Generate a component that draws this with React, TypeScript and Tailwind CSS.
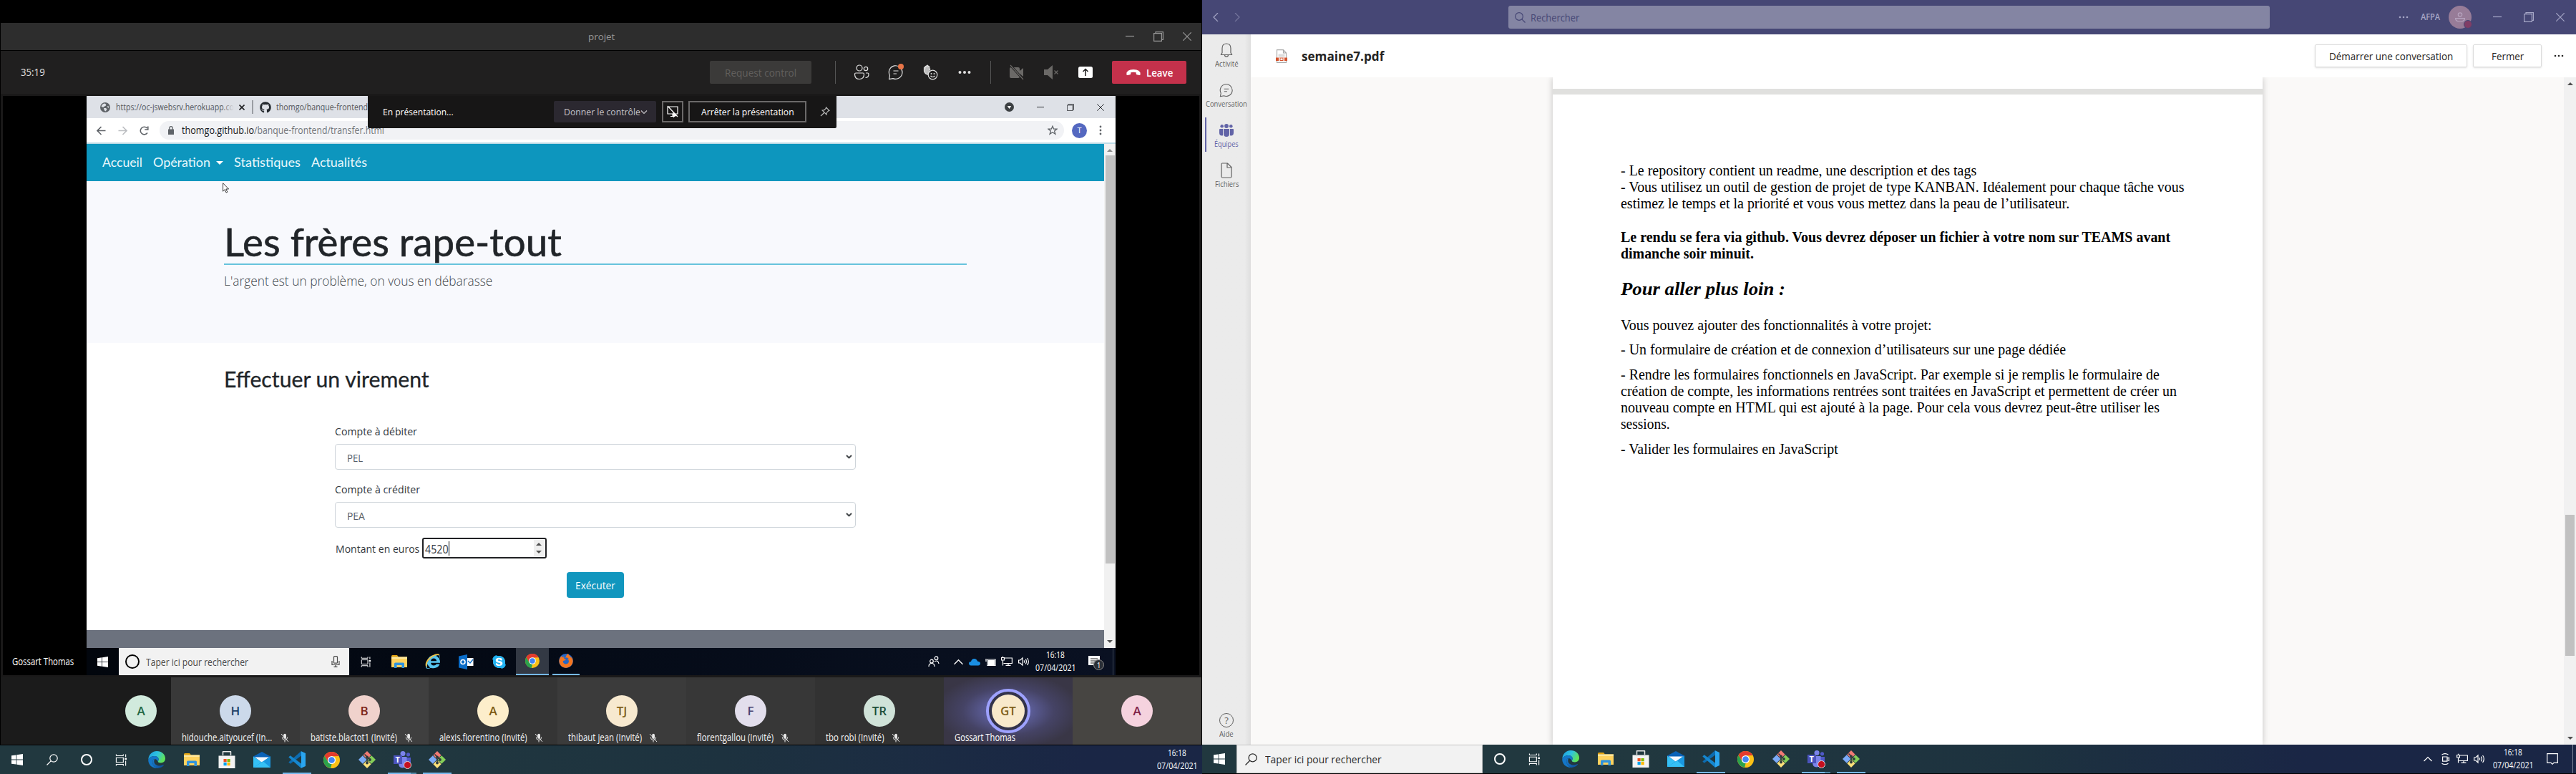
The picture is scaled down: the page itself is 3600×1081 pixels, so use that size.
import React, { useLayoutEffect, useRef, useState } from "react";
import { FaGithub, FaSkype, FaFirefoxBrowser, FaInternetExplorer } from "react-icons/fa";

/* A single line of text condensed or stretched to a given width. */
function Fit({ w, className = "", children }: { w: number; className?: string; children: React.ReactNode }) {
  const ref = useRef<HTMLSpanElement>(null);
  const [k, setK] = useState(1);
  useLayoutEffect(() => {
    if (ref.current) setK(w / ref.current.offsetWidth);
  }, [w]);
  return (
    <span className={"inline-block shrink-0 whitespace-nowrap " + className} style={{ width: w }}>
      <span ref={ref} className="inline-block origin-left" style={{ transform: `scaleX(${k})` }}>
        {children}
      </span>
    </span>
  );
}

function Svg({ s = 20, h, vb = "0 0 20 20", className = "", children }: { s?: number; h?: number; vb?: string; className?: string; children: React.ReactNode }) {
  return (
    <svg width={s} height={h ?? s} viewBox={vb} className={"shrink-0 " + className} fill="none" stroke="currentColor" strokeWidth="1.2">
      {children}
    </svg>
  );
}

const Min = ({ s = 12 }) => <Svg s={s} vb="0 0 12 12"><path d="M0 5.5h12" /></Svg>;
const Restore = ({ s = 14 }) => <Svg s={s} vb="0 0 14 14"><path d="M.6 2.6h10.8v10.8H.6zM3 2.6V.6h10.4v10.8h-2" /></Svg>;
const Cross = ({ s = 12 }) => <Svg s={s} vb="0 0 12 12"><path d="M.3.3l11.4 11.4M11.7.3L.3 11.7" /></Svg>;
const Dots = ({ s = 14 }) => <Svg s={s} vb="0 0 14 14"><g fill="currentColor" stroke="none"><circle cx="2" cy="7" r="1.3" /><circle cx="7" cy="7" r="1.3" /><circle cx="12" cy="7" r="1.3" /></g></Svg>;

const WinLogo = ({ s = 16 }) => (
  <Svg s={s} vb="0 0 16 16"><path fill="#fff" stroke="none" d="M0 2.3l6.6-.9v6.2H0zM7.4 1.3L16 0v7.6H7.4zM0 8.4h6.6v6.2L0 13.7zM7.4 8.4H16V16l-8.6-1.3z" /></Svg>
);
const Magnifier = ({ s = 16 }) => <Svg s={s} vb="0 0 16 16"><circle cx="10" cy="6" r="5.2" /><path d="M6.3 9.7L.5 15.5" /></Svg>;
const TaskView = ({ s = 18 }) => (
  <Svg s={s} vb="0 0 18 18"><path d="M1.5 5.500h10.500v7H1.500zM1.500 .5v2.200M12 .5v2.200M1.500 2.700H12M1.500 17.500v-2.200h10.500v2.200M15.500 .5v4M15.500 10v7.500" /><path d="M14 6h3v2.500h-3z" fill="currentColor" stroke="none" /></Svg>
);
const Edge = () => (
  <Svg s={24} vb="0 0 24 24">
    <defs>
      <linearGradient id="edA" x1="0" y1="0" x2="1" y2=".4"><stop offset="0" stopColor="#1b9de2" /><stop offset=".55" stopColor="#2fc3df" /><stop offset="1" stopColor="#5fe35a" /></linearGradient>
      <linearGradient id="edB" x1="0" y1="0" x2="1" y2="1"><stop offset="0" stopColor="#1b7fd0" /><stop offset="1" stopColor="#0c4a94" /></linearGradient>
    </defs>
    <g stroke="none">
      <path fill="url(#edA)" d="M.3 11.500C1 4 6.500 0 12 0c7 0 12 4.800 12 10.300 0 4.200-3 6.200-6 6.200-2.700 0-4.300-1-4.300-2 0-.8 1-1.200 1-3C14.700 9 12 7 8.800 7 5 7 1.800 9 .3 11.500z" />
      <path fill="#1477c8" d="M.3 11.500C1.800 9 5 7 8.800 7c3.200 0 5.900 2 5.900 4.500 0 1.800-1 2.200-1 3 0 0-2-3.500-4.500-3.500-2 0-3 2-3 4.500 0 4 3 7.500 6.800 8.400C5.500 24.500-.5 18.500.3 11.500z" />
      <path fill="url(#edB)" d="M6.200 15.500c0-2.500 1-4.500 3-4.500-.6 1-.9 2-.9 3.200 0 4 4 6.300 8 6.300 2.500 0 4.200-1 5.200-1.400.5 0 .6.300.4.700C20 22.500 16.500 24 13 23.900c-3.800-.9-6.800-4.400-6.800-8.400z" />
    </g>
  </Svg>
);
const Folder = () => (
  <Svg s={22} h={20} vb="0 0 22 20"><g stroke="none"><path fill="#e5a50f" d="M0 2.500Q0 1 1.500 1H8l2 2.500H0z" /><path fill="#ffd25e" d="M0 3.500h22V18H0z" /><path fill="#2f93dd" d="M4 19v-6q0-1.500 1.500-1.500h11Q18 11.500 18 13v6h-3.500v-4h-7v4z" /><path fill="#ffe79b" d="M0 3.500h22V6H0z" /></g></Svg>
);
const Store = () => (
  <Svg s={24} h={24} vb="0 0 24 24"><path stroke="#e8e8e8" strokeWidth="1.500" d="M6.500 6V1q0-.3.500-.3h10q.5 0 .5.300v5" /><g stroke="none"><path fill="#f3f3f3" d="M.5 6.500h23V24H.5z" /><path fill="#f25022" d="M7.500 11H11.700v4.200H7.500z" /><path fill="#7fba00" d="M12.500 11h4.200v4.200h-4.200z" /><path fill="#00a4ef" d="M7.500 16h4.200v4.200H7.500z" /><path fill="#ffb900" d="M12.500 16h4.200v4.200h-4.200z" /></g></Svg>
);
const Mail = () => (
  <Svg s={24} h={22} vb="0 0 24 22"><g stroke="none"><path fill="#0a63b8" d="M0 6.500l12-6.500 12 6.500v8H0z" /><path fill="#f5f9fd" d="M2 7.500h20L12 15z" /><path fill="#35c0f5" d="M0 6.500L12 15l12-8.500V22H0z" /><path fill="#1a97e0" d="M0 22L24 6.500V22z" /><path fill="#35c0f5" d="M0 22L14 13.500 24 22z" /></g></Svg>
);
const Code = () => (
  <Svg s={24} vb="0 0 24 24"><g stroke="none"><path fill="#0d6cb0" d="M.3 15.600L2.700 17.700 18 6.500V0z" /><path fill="#1587cf" d="M.3 8.400L2.700 6.300 18 17.500V24z" /><path fill="#2aa5ef" d="M17.500 0L24 3v18l-6.500 3q.5-.3.500-1.500v-21q0-1.200-.5-1.500z" /></g></Svg>
);
const Chrome = ({ s = 23 }) => (
  <Svg s={s} vb="0 0 24 24"><g stroke="none"><circle cx="12" cy="12" r="12" fill="#fbc116" /><path fill="#e33b2e" d="M1.600 6A12 12 0 0 1 22.400 6.200L12 6.500 7 15z" /><path fill="#2ba24c" d="M1.600 6L7 15l5 3-1.500 5.900A12 12 0 0 1 1.600 6z" /><circle cx="12" cy="12" r="5.800" fill="#fff" /><circle cx="12" cy="12" r="4.500" fill="#4285f4" /></g></Svg>
);
const Git = () => (
  <Svg s={24} vb="0 0 24 24">
    <g stroke="none"><path fill="#f27b74" d="M12 0l5.600 5.700L12 11.400 6.400 5.700z" /><path fill="#7cabf8" d="M5.800 6.300l5.700 5.700-5.700 5.700L0 12z" /><path fill="#85cf58" d="M18.200 6.300L24 12l-5.800 5.700-5.700-5.700z" /><path fill="#fbe07a" d="M12 12.600l5.600 5.700L12 24l-5.600-5.700z" /></g>
    <path stroke="#2d3a3e" strokeWidth="1.600" d="M8.500 4.500L12 8v9M12 8l4 4" /><g fill="#2d3a3e" stroke="none"><circle cx="12" cy="8.300" r="1.900" /><circle cx="12" cy="16.500" r="1.900" /><circle cx="16" cy="12" r="1.900" /></g>
  </Svg>
);
const Teams = () => (
  <div className="relative flex size-6 items-center justify-center">
    <Svg s={24} vb="0 0 24 24"><g stroke="none"><circle cx="13" cy="3.500" r="3.500" fill="#7b83eb" /><circle cx="20.500" cy="4.800" r="2.600" fill="#5059c9" /><path fill="#5059c9" d="M16 9h8v7q-.5 5-5 5z" /><path fill="#7b83eb" d="M7 8h11.500v9q-.8 6.500-6 6.500T7 17z" /><path fill="#4b53bc" d="M0 6h12v12H0z" /></g></Svg>
    <span className="absolute left-[3px] top-[4px] text-[11px] font-bold leading-4 text-white">T</span>
    <span className="absolute -bottom-px left-[14px] size-[11px] rounded-full border border-[#dcdcdc] bg-[#c50f1f]" />
  </div>
);
const Chat = ({ s = 22 }) => <Svg s={s} vb="0 0 22 22"><path d="M2.500 15.500A9.300 9.300 0 1 1 7 19.600L1.500 20.700z" strokeLinejoin="round" /><path d="M7.500 9h7M7.500 13h4.500" /></Svg>;
const Net = ({ s = 16 }) => <Svg s={s} vb="0 0 16 16"><path d="M5 3h10.400v7.500H3.500M.6 2.500h3.800v3.500H.6zM2.500 6v7.500M2.500 2V.8M10 10.500V13M6.500 13.400h7" /></Svg>;
const Vol = ({ s = 16 }) => <Svg s={s} vb="0 0 16 16"><path d="M.6 6h2.200L6 3v10L2.800 10H.6zM8 6.300q1.200 1.700 0 3.400M10.300 4.600q2.300 3.400 0 6.800M12.600 3q3.500 5 0 10" /></Svg>;
const Up = ({ s = 12 }) => <Svg s={s} vb="0 0 12 12"><path d="M.5 9L6 3.500 11.500 9" /></Svg>;
const MicOff = () => (
  <Svg s={12} h={13} vb="0 0 12 13"><rect x="4.200" y=".8" width="3.800" height="7" rx="1.900" fill="#e8e8e8" stroke="none" /><path stroke="#e8e8e8" strokeWidth="1" d="M2.300 5.500q0 4 3.700 4t3.700-4M6 9.500V12.500M1 1l10 11" /></Svg>
);
const Caret = ({ up = false, c = "#505050" }) => <Svg s={8} h={4} vb="0 0 8 4"><path fill={c} stroke="none" d={up ? "M0 4l4-4 4 4z" : "M0 0l4 4 4-4z"} /></Svg>;

function Clock() {
  return (
    <div className="flex w-[58px] shrink-0 flex-col items-center text-[12px] leading-[18px] text-white">
      <Fit w={26}>16:18</Fit>
      <Fit w={57}>07/04/2021</Fit>
    </div>
  );
}

function Slot({ children, line }: { children: React.ReactNode; line?: string }) {
  return (
    <div className="relative flex h-full w-[49px] shrink-0 items-center justify-center">
      {children}
      {line && <span className={"absolute bottom-0 h-0.5 w-10 bg-[#76b9ed] " + line} />}
    </div>
  );
}

function AppIcons() {
  return (
    <>
      <Slot><Edge /></Slot>
      <Slot><Folder /></Slot>
      <Slot><Store /></Slot>
      <Slot><Mail /></Slot>
      <Slot line="block"><Code /></Slot>
      <Slot><Chrome /></Slot>
      <Slot><Git /></Slot>
      <Slot line="border-r-8 border-[#5089a8]"><Teams /></Slot>
      <Slot line="block"><Git /></Slot>
    </>
  );
}

function MeetingHeader() {
  return (
    <>
      <div className="flex h-[38px] items-center bg-[#2d2d2d] text-[#979797]">
        <Fit w={37} className="ml-[821px] text-[13px] leading-5">projet</Fit>
        <div className="ml-auto mr-[14px] flex items-center gap-[27px]"><Min /><Restore /><Cross /></div>
      </div>
      <div className="mt-px flex h-[60px] items-center bg-[#201f1f] text-[#e0e0e0]">
        <Fit w={34} className="ml-7 text-[14px] leading-5">35:19</Fit>
        <div className="ml-[929px] flex h-8 w-[142px] items-center justify-center rounded-[2px] bg-[#3b3a39] text-[14px] text-[#62605e]"><Fit w={100}>Request control</Fit></div>
        <div className="ml-[33px] h-8 w-px bg-[#555]" />
        <div className="ml-3 flex items-center">
          <div className="flex w-12 justify-center"><Svg s={22} vb="0 0 22 22"><circle cx="8" cy="5" r="4" /><circle cx="17" cy="6" r="2.700" /><path d="M3 12h10q1.500 0 1.500 1.500 0 7-6.500 7t-6.500-7Q1.500 12 3 12zM17 12h2.500q1.500 0 1.500 1.500 0 5-4.500 5" /></Svg></div>
          <div className="relative flex w-12 justify-center"><Chat /><span className="absolute -top-[1px] right-[13px] size-2 rounded-full bg-[#e97548]" /></div>
          <div className="flex w-12 justify-center"><Svg s={22} vb="0 0 22 22"><path d="M9 14.500q-5-.5-6.500-5V4.500q.6-1 1.500 0V3q1-1.200 1.900 0V1.800q1.100-1.400 2.100 0V3q1-1 1.800 0v4l1.500-1" fill="#bdbdbd" /><circle cx="14.500" cy="14.500" r="6.300" fill="#201f1f" /><path d="M11.500 16q3 3 6 0" /><g fill="currentColor" stroke="none"><circle cx="12.500" cy="13" r="1" /><circle cx="16.500" cy="13" r="1" /></g></Svg></div>
          <div className="flex w-12 justify-center"><Svg s={20}><g fill="currentColor" stroke="none"><circle cx="3.500" cy="10" r="2" /><circle cx="10" cy="10" r="2" /><circle cx="16.500" cy="10" r="2" /></g></Svg></div>
        </div>
        <div className="ml-3 h-8 w-px bg-[#555]" />
        <div className="ml-3 flex items-center text-[#6b6967]">
          <div className="flex w-12 justify-center"><Svg s={22} vb="0 0 22 22"><path fill="currentColor" stroke="none" d="M3 4h10q2 0 2 2v3l5-4v12l-5-4v4q0 2-2 2H3q-2 0-2-2V6q0-2 2-2z" /><path stroke="#201f1f" strokeWidth="3" d="M2 1l18 20" /><path d="M2 1l18 20" /></Svg></div>
          <div className="flex w-12 justify-center"><Svg s={22} vb="0 0 22 22"><path fill="currentColor" stroke="none" d="M1 7h5l7-6v20l-7-6H1z" /><path d="M15.500 8.500l5 5M20.500 8.500l-5 5" /></Svg></div>
          <div className="flex w-12 justify-center"><Svg s={20}><rect width="20" height="16" y="2" rx="2.500" fill="#fff" stroke="none" /><path stroke="#201f1f" strokeWidth="1.500" d="M10 15V6M6.500 9L10 5.500 13.500 9" /></Svg></div>
        </div>
        <div className="ml-auto mr-[21px] flex h-8 w-[104px] items-center justify-center gap-2 rounded-[2px] bg-[#c4314b] text-[14px] font-semibold text-white">
          <Svg s={20} h={10} vb="0 0 20 10"><path fill="#fff" stroke="none" d="M.3 7.500Q.3 1 10 1t9.700 6.500q0 1.700-1.500 1.500l-3.500-.7q-1-.3-1-1.500l.1-1.500q-3.800-1.200-7.600 0l.1 1.500q0 1.200-1 1.500L1.800 9Q.3 9.200.3 7.500z" /></Svg>
          <Fit w={37}>Leave</Fit>
        </div>
      </div>
    </>
  );
}

function PresentBar() {
  return (
    <div className="flex h-[45px] w-[655px] shrink-0 items-center rounded-b-[2px] bg-[#171616] pb-px text-[13.500px] leading-5 text-white">
      <Fit w={99} className="ml-[21px]">En présentation...</Fit>
      <div className="ml-[140px] flex h-[30px] w-[143px] items-center rounded-[2px] bg-[#2b2830] pl-[14px] text-[#c4c2c6]">
        <Fit w={107}>Donner le contrôle</Fit>
        <Svg s={10} vb="0 0 10 10"><path d="M1 3.500l4 4 4-4" /></Svg>
      </div>
      <div className="ml-2 flex size-[30px] items-center justify-center border-2 border-[#6b6969]"><Svg s={18} vb="0 0 18 18"><path d="M2 2h14v10H2zM6 15.500h6M9 12v3M2 1l14 15" /><path fill="#fff" stroke="none" d="M9 10l6 5-3 .5-2 2z" /></Svg></div>
      <div className="ml-[7px] flex h-[30px] w-[165px] items-center justify-center border-2 border-[#6b6969]"><Fit w={130}>Arrêter la présentation</Fit></div>
      <Svg s={14} vb="0 0 14 14" className="ml-[19px] text-[#b5b5b5]"><path d="M8.500 1l4.500 4.500-1.300.4-2.200 2.300-.5 2.800L3.200 5.200 6 4.700l2.200-2.300zM6 8.200L1 13" /></Svg>
    </div>
  );
}

function BrowserChrome() {
  return (
    <div className="relative h-[67px] bg-white">
      <div className="flex h-[31px] items-center bg-[#dee1e7] text-[12.500px] leading-5 text-[#55585d]">
        <Svg s={14} vb="0 0 14 14" className="ml-[19px]"><circle cx="7" cy="7" r="7" fill="#5f6368" stroke="none" /><path fill="#dee1e7" stroke="none" d="M6 1.500q3 1 2 3l-2 1q-1 2-3 1L1.500 5.500Q3 2 6 1.500zM5 8h3q2 1 1 2.500L7.500 12.500Q5 11 5 8zM10 5q2 0 2.500 1.500L11 8z" /></Svg>
        <div className="relative ml-2 flex"><Fit w={165}>https://oc-jswebsrv.herokuapp.co</Fit><span className="absolute inset-y-0 right-0 w-4 bg-gradient-to-r from-transparent to-[#dee1e7]" /></div>
        <div className="ml-[7px] flex text-[#202124]"><Svg s={8} vb="0 0 8 8"><path strokeWidth="1.600" d="M.5.5l7 7M7.500.5l-7 7" /></Svg></div>
        <div className="ml-[10px] h-[19px] w-[1.500px] bg-[#9a9da3]" />
        <FaGithub size={16} className="ml-[9px] text-[#24292e]" />
        <Fit w={128} className="ml-[7px]">thomgo/banque-frontend</Fit>
        <div className="ml-auto mr-4 flex items-center gap-[32px] text-[#33363a]">
          <Svg s={13} vb="0 0 13 13"><circle cx="6.500" cy="6.500" r="6.500" fill="#3c4043" stroke="none" /><path fill="#fff" stroke="none" d="M3.800 5h5.400L6.500 9z" /></Svg>
          <Min s={10} />
          <Restore s={10} />
          <Cross s={10} />
        </div>
      </div>
      <div className="flex h-[34px] items-center text-[#5f6368]">
        <div className="ml-[5px] flex w-[90px] items-center justify-around">
          <Svg s={13} vb="0 0 13 13"><path strokeWidth="1.600" d="M12.500 6.500H1.500M6.500 1L1 6.500 6.500 12" /></Svg>
          <Svg s={13} vb="0 0 13 13" className="text-[#bcbec2]"><path strokeWidth="1.600" d="M.5 6.500h11M6.500 1L12 6.500 6.500 12" /></Svg>
          <Svg s={13} vb="0 0 13 13"><path strokeWidth="1.600" d="M11 9.500A5.300 5.300 0 1 1 10.500 3M11.800 .5v4.500h-4.500" /></Svg>
        </div>
        <div className="ml-[7px] flex h-[26px] w-[1264px] items-center rounded-full bg-[#f1f2f5] text-[14px] leading-5">
          <Svg s={10} h={12} vb="0 0 10 12" className="ml-[11px]"><path fill="currentColor" stroke="none" d="M1 4.500h8V12H1z" /><path d="M2.800 5V3q0-2.300 2.200-2.300T7.200 3v2" strokeWidth="1.300" /></Svg>
          <Fit w={101} className="ml-[10px] text-[#202124]">thomgo.github.io</Fit>
          <Fit w={182} className="text-[#73777c]">/banque-frontend/transfer.html</Fit>
          <Svg s={14} vb="0 0 14 14" className="ml-auto mr-[9px]"><path strokeWidth="1.300" d="M7 1.200l1.700 4h4.300L9.600 7.900l1.300 4.400L7 9.800l-3.900 2.500 1.300-4.400L1 5.200h4.300z" /></Svg>
        </div>
        <div className="ml-[11px] flex size-[21px] items-center justify-center rounded-full bg-[#5468c0] text-[11px] text-white">T</div>
        <Svg s={4} h={14} vb="0 0 4 14" className="ml-[17px]"><g fill="currentColor" stroke="none"><circle cx="2" cy="2" r="1.400" /><circle cx="2" cy="7" r="1.400" /><circle cx="2" cy="12" r="1.400" /></g></Svg>
      </div>
      <div className="h-0.5 bg-[#bcdbe6]" />
      <div className="absolute left-[393px] top-0"><PresentBar /></div>
    </div>
  );
}

function Select({ label, value, w, vw }: { label: string; value: string; w: number; vw: number }) {
  return (
    <div className="flex flex-col text-[15px] text-[#33383d]">
      <Fit w={w} className="leading-6">{label}</Fit>
      <div className="mt-[6px] flex h-9 items-center rounded border border-[#ced4da] bg-white pl-4 pr-1 text-[#565c63]">
        <Fit w={vw} className="pt-0.5">{value}</Fit>
        <Svg s={9} h={6} vb="0 0 9 6" className="ml-auto text-[#3c4043]"><path strokeWidth="1.800" d="M1 1l3.500 3.500L8 1" /></Svg>
      </div>
    </div>
  );
}

function BankPage() {
  return (
    <div className="flex h-[704px]">
      <div className="flex w-[1422px] flex-col bg-white">
        <nav className="relative flex h-[52px] items-center bg-[#0d96be] font-[Lato] text-[17px] leading-6 text-[#e9f7fb]">
          <Fit w={56} className="ml-[22px]">Accueil</Fit>
          <Fit w={80} className="ml-[15px]">Opération</Fit>
          <div className="ml-2 flex w-[10px]"><Svg s={10} h={5} vb="0 0 10 5"><path fill="#fff" stroke="none" d="M0 0h10L5 5z" /></Svg></div>
          <Fit w={93} className="ml-[15px]">Statistiques</Fit>
          <Fit w={78} className="ml-[15px]">Actualités</Fit>
          <div className="absolute left-[190px] top-[54px]"><Svg s={10} h={15} vb="0 0 10 15"><path fill="#fff" stroke="#222" strokeWidth=".9" d="M.6.8v11.400l2.600-2.500 1.900 4.300 1.700-.8-1.900-4.200H8.600z" /></Svg></div>
        </nav>
        <header className="flex h-[226px] flex-col bg-[#f8f9fd] pl-[192px]">
          <div className="mt-[48px] flex h-[69px] w-[1038px] border-b-2 border-[#67c3dc]">
            <Fit w={472} className="pt-px font-[Lato] text-[54px] leading-[72px] text-[#212529] [-webkit-text-stroke:0.6px_#212529]">Les frères rape-tout</Fit>
          </div>
          <Fit w={375} className="mt-[9px] text-[18.500px] font-light leading-[26px] text-[#41464b]">L'argent est un problème, on vous en débarasse</Fit>
        </header>
        <main className="flex flex-col">
          <Fit w={287} className="ml-[192px] mt-[30px] font-[Lato] text-[30px] leading-10 text-[#212529] [-webkit-text-stroke:0.3px_#212529]">Effectuer un virement</Fit>
          <form className="ml-[347px] mt-[41px] flex w-[728px] flex-col">
            <Select label="Compte à débiter" value="PEL" w={115} vw={22} />
            <div className="mt-[15px]"><Select label="Compte à créditer" value="PEA" w={119} vw={25} /></div>
            <div className="mt-[14px] flex items-center text-[15px] text-[#33383d]">
              <Fit w={117} className="ml-px pt-0.5">Montant en euros</Fit>
              <div className="ml-1 flex h-[29px] w-[174px] items-center rounded-[3px] border-2 border-[#202124] bg-white pl-0.5 pr-0.5">
                <Fit w={33} className="pt-0.5 text-[16px]">4520</Fit>
                <span className="h-5 w-px bg-black" />
                <div className="ml-auto flex h-[23px] w-[14px] flex-col items-center justify-center gap-[7px] bg-[#efefef]"><Caret up /><Caret /></div>
              </div>
            </div>
            <div className="ml-[324px] mt-[19px] flex h-9 w-20 items-center justify-center rounded bg-[#1196be] pt-px text-[15px] text-white"><Fit w={56}>Exécuter</Fit></div>
          </form>
        </main>
        <footer className="mt-auto h-[25px] bg-[#6c727e]" />
      </div>
      <div className="flex w-4 flex-col items-center bg-[#f1f1f1] py-[7px]">
        <Caret up c="#8a8a8a" />
        <div className="mt-[5px] h-[570px] w-[13px] bg-[#c1c1c1]" />
        <div className="mt-auto"><Caret /></div>
      </div>
    </div>
  );
}

function SharedTaskbar() {
  return (
    <div className="flex h-[38px] items-center bg-gradient-to-r from-[#02060d] to-[#0a1122] text-white">
      <div className="flex w-[45px] justify-center"><WinLogo s={15} /></div>
      <div className="flex h-full w-[322px] items-center bg-[#f2f2f2] text-[#4a4a4a]">
        <div className="ml-[9px] size-[20px] rounded-full border-2 border-black" />
        <Fit w={143} className="ml-[9px] text-[14px]">Taper ici pour rechercher</Fit>
        <Svg s={12} h={16} vb="0 0 12 16" className="ml-auto mr-[13px]"><rect x="3.500" y=".7" width="5" height="9.500" rx="1" /><path d="M1 7v5.500h10V7M6 12.500V15.500M3.500 15.400h5" /></Svg>
      </div>
      <div className="flex w-[47px] justify-center"><TaskView s={15} /></div>
      <div className="flex w-[46px] justify-center"><Folder /></div>
      <div className="relative flex w-[47px] justify-center"><FaInternetExplorer size={20} color="#57c5f0" /><Svg s={24} vb="0 0 24 24" className="absolute -top-0.5"><path stroke="#f5c342" strokeWidth="1.800" d="M3 19Q1 13 8 7t13-4.500" /></Svg></div>
      <div className="flex w-[46px] justify-center"><Svg s={21} vb="0 0 21 21"><g stroke="none"><path fill="#fff" d="M9 5h11.500v11H9z" /><path fill="#0a6cc7" d="M0 2.500L12 0v21L0 18.500z" /></g><circle cx="6" cy="10.500" r="3" stroke="#fff" strokeWidth="1.600" /><path stroke="#0a6cc7" strokeWidth="1.400" d="M13 9l3 3 4-5" /></Svg></div>
      <div className="flex w-[47px] justify-center"><FaSkype size={21} color="#21b3f2" className="rounded-full bg-radial from-white from-50% to-transparent to-60%" /></div>
      <div className="flex h-full w-[46px] items-center justify-center border-b-2 border-[#76b9ed] bg-[#333944]"><Chrome s={20} /></div>
      <div className="ml-[5px] flex h-full w-[38px] items-center justify-center border-b-2 border-[#76b9ed]"><span className="rounded-full bg-[#2766c4]"><FaFirefoxBrowser size={20} color="#f5761f" /></span></div>
      <div className="ml-auto flex items-center">
        <Svg s={16} vb="0 0 16 16"><circle cx="5" cy="7.500" r="2.300" /><circle cx="11.500" cy="3.200" r="2.300" /><path d="M1 15q0-4.500 4-4.500T9 15M9 8q5-3 6 3" /></Svg>
        <div className="ml-[20px] flex"><Up s={13} /></div>
        <Svg s={16} h={11} vb="0 0 16 11" className="ml-[8px]"><path fill="#1a8fe3" stroke="none" d="M3 10.500Q0 10 0 7.500T3 5Q4 1 7.500 1T12 4.500q4 .5 4 3t-3 3z" /></Svg>
        <Svg s={15} h={11} vb="0 0 15 11" className="ml-[7px]"><path fill="#fff" stroke="none" d="M4 3h9v7H4z" /><path d="M3 2h11v8.500H3zM1 1v4" /></Svg>
        <div className="ml-[7px] flex"><Net /></div>
        <div className="ml-[8px] flex"><Vol /></div>
        <div className="ml-[7px]"><Clock /></div>
        <div className="relative ml-[17px] mr-[12px] flex w-[22px]">
          <Svg s={16} vb="0 0 16 16"><path fill="#fff" stroke="none" d="M0 0h16v13h-5l-3 3v-3H0z" /><path stroke="#222" d="M3 4h10M3 7h10M3 10h6" /></Svg>
          <span className="absolute left-[7px] top-[5px] flex size-[15px] items-center justify-center rounded-full border border-[#888] bg-[#2b2f36] text-[10px] leading-none">1</span>
        </div>
        <div className="mr-[3px] h-[38px] w-px bg-[#394250]" />
      </div>
    </div>
  );
}

const people = [
  { i: "H", n: "hidouche.aityoucef (In...", w: 126, g: "gap-[12px]", tile: "bg-[#393939]", av: "bg-[#ccd9ea] text-[#1d3f66]" },
  { i: "B", n: "batiste.blactot1 (Invité)", w: 121, g: "gap-[10px]", tile: "bg-[#3f3f3f]", av: "bg-[#f0d2cc] text-[#7c2516]" },
  { i: "A", n: "alexis.fiorentino (Invité)", w: 123, g: "gap-[10px]", tile: "bg-[#353535]", av: "bg-[#fdeecb] text-[#7c5a12]" },
  { i: "TJ", n: "thibaut jean (Invité)", w: 103, g: "gap-[10px]", tile: "bg-[#3b3b3b]", av: "bg-[#f7e9cf] text-[#80601a]" },
  { i: "F", n: "florentgallou (Invité)", w: 107, g: "gap-[10px]", tile: "bg-[#373737]", av: "bg-[#e2deec] text-[#48426e]" },
  { i: "TR", n: "tbo robi (Invité)", w: 82, g: "gap-[10px]", tile: "bg-[#323232]", av: "bg-[#cfe2d8] text-[#1d4f39]" },
];

function Tile({ p }: { p: (typeof people)[number] }) {
  return (
    <div className={"flex w-[180px] shrink-0 flex-col items-center pt-[25px] " + p.tile}>
      <div className={"flex size-[44px] items-center justify-center rounded-full text-[17px] font-semibold " + p.av}>{p.i}</div>
      <div className={"mt-[5px] flex h-5 items-center self-start pl-[15px] text-[14px] leading-5 text-[#f4f4f4] " + p.g}>
        <Fit w={p.w}>{p.n}</Fit>
        <MicOff />
      </div>
    </div>
  );
}

function Participants() {
  return (
    <div className="flex h-[94px]">
      <div className="flex w-[238px] shrink-0 justify-end bg-[#1b1b1b] pr-[20px] pt-[25px]">
        <div className="flex size-[44px] items-center justify-center rounded-full bg-[#d1eadd] text-[17px] font-semibold text-[#226744]">A</div>
      </div>
      {people.map((p) => <Tile key={p.n} p={p} />)}
      <div className="relative flex w-[180px] shrink-0 flex-col items-center bg-[#3a3746] bg-radial from-[#5f61a0] from-20% via-[#454365] via-50% to-[#393646] to-80% pt-[16px]">
        <div className="flex size-[62px] shrink-0 items-center justify-center rounded-full border-4 border-[#9ea2ff] bg-[#33334a]">
          <div className="flex size-[46px] items-center justify-center rounded-full bg-[#f8e9cb] text-[17px] font-semibold text-[#80601a]">GT</div>
        </div>
        <Fit w={85} className="absolute left-[15px] top-[74px] text-[14px] leading-5 text-white">Gossart Thomas</Fit>
      </div>
      <div className="flex flex-1 justify-center bg-[#474542] pt-[25px]">
        <div className="flex size-[44px] items-center justify-center rounded-full bg-[#f5d2de] text-[17px] font-semibold text-[#802247]">A</div>
      </div>
    </div>
  );
}

function LeftScreen() {
  return (
    <div className="flex h-[1081px] w-[1680px] shrink-0 flex-col bg-black pt-8">
      <div className="ml-px mr-px flex flex-col">
        <MeetingHeader />
        <div className="bg-[#1a1919] px-[3px] pb-[3px] pt-[3px]">
          <div className="flex h-[809px] bg-black">
            <div className="flex w-[117px] items-end pb-[9px] pl-[13px] text-[14px] leading-5 text-white"><Fit w={86}>Gossart Thomas</Fit></div>
            <div className="w-[1438px]">
              <BrowserChrome />
              <BankPage />
              <SharedTaskbar />
            </div>
          </div>
        </div>
        <Participants />
      </div>
      <div className="mt-px flex h-10 items-center bg-gradient-to-r from-[#21383f] from-30% via-[#1d323f] via-60% to-[#1a2645] to-90% text-white">
        <div className="flex w-12 justify-center"><WinLogo /></div>
        <div className="flex w-[49px] justify-center"><Magnifier /></div>
        <div className="flex w-12 justify-center"><div className="size-4 rounded-full border-2 border-white" /></div>
        <div className="flex w-[49px] justify-center"><TaskView s={17} /></div>
        <AppIcons />
        <div className="ml-auto mr-[6px]"><Clock /></div>
      </div>
    </div>
  );
}

function SideItem({ icon, label, w, active }: { icon: React.ReactNode; label: string; w: number; active?: boolean }) {
  return (
    <div className={"relative flex h-14 flex-col items-center pt-[11px] text-[10.500px] leading-[14px] " + (active ? "text-[#6264a7]" : "text-[#616161]")}>
      {active && <span className="absolute left-[4px] top-1 h-12 w-0.5 bg-[#6264a7]" />}
      <div className="flex h-[22px] shrink-0 items-center">{icon}</div>
      <Fit w={w} className="mt-px">{label}</Fit>
    </div>
  );
}

function Sidebar() {
  return (
    <aside className="flex w-[68px] shrink-0 flex-col bg-gradient-to-r from-[#ebebeb] from-88% to-[#dedede]">
      <SideItem w={33} label="Activité" icon={<Svg s={20}><path d="M4 13.500V7.500Q4 1 10 1t6 6.500v6l1.500 3h-15zM7.500 16.500q0 2.700 2.500 2.700t2.500-2.700" /></Svg>} />
      <SideItem w={58} label="Conversation" icon={<Chat s={20} />} />
      <SideItem active w={34} label="Équipes" icon={<Svg s={20}><g fill="currentColor" stroke="none"><circle cx="10" cy="4" r="2.900" /><circle cx="3.700" cy="4.300" r="2.300" /><circle cx="16.300" cy="4.300" r="2.300" /><path d="M6 8h8v6.500Q14 19 10 19t-4-4.500zM0 9q0-1 1-1h4v9.300Q0 18 0 13.500zM20 9q0-1-1-1h-4v9.300q5 .7 5-3.800z" /></g></Svg>} />
      <SideItem w={33} label="Fichiers" icon={<Svg s={20} h={22} vb="0 0 20 22"><path d="M4 1h7.500L17 6.500V19.500Q17 21 15.500 21h-11Q3 21 3 19.500V2.500Q3 1 4 1zM11 1v6h6" /></Svg>} />
      <div className="mt-auto"><SideItem w={20} label="Aide" icon={<div className="flex size-[20px] items-center justify-center rounded-full border border-[#616161] text-[13px]">?</div>} /></div>
    </aside>
  );
}

function Doc() {
  const l = "leading-[23px] h-[23px]";
  return (
    <div className="flex flex-1 flex-col bg-white pl-[95px] pt-[94px] font-['Liberation_Serif'] text-[20px] text-black">
      <Fit w={497} className="h-6 leading-6">- Le repository contient un readme, une description et des tags</Fit>
      <Fit w={788} className={l}>- Vous utilisez un outil de gestion de projet de type KANBAN. Idéalement pour chaque tâche vous</Fit>
      <Fit w={627} className={l}>estimez le temps et la priorité et vous vous mettez dans la peau de l’utilisateur.</Fit>
      <Fit w={768} className={l + " mt-6 font-bold"}>Le rendu se fera via github. Vous devrez déposer un fichier à votre nom sur TEAMS avant</Fit>
      <Fit w={186} className={l + " font-bold"}>dimanche soir minuit.</Fit>
      <Fit w={230} className="mt-[22px] h-8 text-[26px] font-bold italic leading-8">Pour aller plus loin :</Fit>
      <Fit w={435} className={l + " mt-[23px]"}>Vous pouvez ajouter des fonctionnalités à votre projet:</Fit>
      <Fit w={622} className={l + " mt-[11px]"}>- Un formulaire de création et de connexion d’utilisateurs sur une page dédiée</Fit>
      <Fit w={753} className={l + " mt-3"}>- Rendre les formulaires fonctionnels en JavaScript. Par exemple si je remplis le formulaire de</Fit>
      <Fit w={777} className={l}>création de compte, les informations rentrées sont traitées en JavaScript et permettent de créer un</Fit>
      <Fit w={753} className={l}>nouveau compte en HTML qui est ajouté à la page. Pour cela vous devrez peut-être utiliser les</Fit>
      <Fit w={69} className={l}>sessions.</Fit>
      <Fit w={304} className={l + " mt-3"}>- Valider les formulaires en JavaScript</Fit>
    </div>
  );
}

function RightScreen() {
  return (
    <div className="flex h-[1081px] w-[1920px] shrink-0 flex-col bg-black">
      <div className="flex h-12 shrink-0 items-center bg-[#464775] text-[#a5a6c6]">
        <Svg s={12} vb="0 0 12 12" className="ml-[13px]"><path d="M9 0L3 6l6 6" /></Svg>
        <Svg s={12} vb="0 0 12 12" className="ml-[18px] opacity-50"><path d="M3 0l6 6-6 6" /></Svg>
        <div className="ml-[373px] flex h-8 w-[1064px] items-center rounded-[3px] bg-[#8485a3] text-[14px] text-[#464775]">
          <Svg s={15} vb="0 0 15 15" className="ml-[9px]"><circle cx="6" cy="6" r="5.300" /><path d="M9.800 9.800l4.700 4.700" /></Svg>
          <Fit w={68} className="ml-[7px]">Rechercher</Fit>
        </div>
        <div className="ml-[180px] flex"><Dots /></div>
        <Fit w={27} className="ml-[17px] text-[13px] font-semibold">AFPA</Fit>
        <div className="relative ml-3 flex size-8 items-center justify-center rounded-full bg-[#977c98] text-[#b7a5bf]">
          <Svg s={14} vb="0 0 14 14"><circle cx="7" cy="3.500" r="2.700" /><path d="M.6 8.700h12.800q0 4.300-6.400 4.300T.6 8.700z" /></Svg>
          <span className="absolute bottom-0 right-[-1px] size-3 rounded-full border border-[#464775] bg-[#803d66]" />
        </div>
        <div className="ml-auto mr-4 flex items-center gap-[31px]"><Min /><Restore /><Cross /></div>
      </div>
      <div className="flex h-[992px] shrink-0">
        <Sidebar />
        <div className="flex flex-1 flex-col">
          <div className="flex h-[60px] shrink-0 items-center bg-white text-[#252423]">
            <Svg s={16} h={19} vb="0 0 16 19" className="ml-[35px]"><path stroke="#a9a9a9" d="M1.500.6h9L14.500 5v13.400h-13zM10.500.6V5h4" /><path fill="#ddd" stroke="none" d="M3.500 6.500h9v4h-9z" /><path fill="#d4522d" stroke="none" d="M0 11.500h16v4.500H0z" /><path fill="#fff" stroke="none" d="M4 11.500h1.500v4.500H4zM6.500 12.500h3v2.500h-3zM10.500 11.500H12v4.500h-1.500z" /></Svg>
            <Fit w={115} className="ml-[20px] text-[18px] font-bold leading-6">semaine7.pdf</Fit>
            <div className="ml-auto flex h-8 w-[213px] items-center justify-center rounded-[2px] border border-[#dcdcdc] text-[14px] shadow-sm"><Fit w={173}>Démarrer une conversation</Fit></div>
            <div className="ml-2 flex h-8 w-24 items-center justify-center rounded-[2px] border border-[#dcdcdc] text-[14px] shadow-sm"><Fit w={45}>Fermer</Fit></div>
            <div className="ml-[17px] mr-[17px] flex"><Dots /></div>
          </div>
          <div className="flex flex-1 overflow-hidden bg-[#faf9f8]">
            <div className="ml-[422px] flex w-[992px] flex-col bg-[#e0e0de] shadow-[0_0_9px_rgba(0,0,0,0.22)]">
              <div className="mb-2 h-4 shrink-0 bg-white" />
              <Doc />
            </div>
            <div className="ml-auto flex w-[17px] flex-col items-center bg-[#f1f1f1] py-[7px]">
              <Caret up />
              <div className="mt-[600px] h-[197px] w-[13px] bg-[#c1c1c1]" />
              <div className="mt-auto"><Caret /></div>
            </div>
          </div>
        </div>
      </div>
      <div className="flex h-10 shrink-0 items-center bg-gradient-to-r from-[#21383f] from-30% via-[#1d323f] via-60% to-[#1a2645] to-80% text-white">
        <div className="flex w-12 justify-center"><WinLogo /></div>
        <div className="flex h-full w-[344px] items-center border border-[#c4c4c4] bg-[#f2f2f2] text-[15px] text-[#2b2b2b]">
          <div className="ml-[11px] flex"><Magnifier s={17} /></div>
          <Fit w={163} className="ml-[11px]">Taper ici pour rechercher</Fit>
        </div>
        <div className="flex w-12 justify-center"><div className="size-4 rounded-full border-2 border-white" /></div>
        <div className="mr-[2px] flex w-12 justify-center"><TaskView s={17} /></div>
        <AppIcons />
        <div className="ml-auto flex items-center">
          <Up />
          <Svg s={16} vb="0 0 16 16" className="ml-[10px]"><path d="M4.600 5h6.300v6.200H4.600zM11 7.200l2.500-1v4L11 9M3.500 2Q8-.8 12.500 2M3.500 14.200q4.500 2.800 9 0" /></Svg>
          <div className="ml-2 flex"><Net /></div>
          <div className="ml-2 flex"><Vol /></div>
          <div className="ml-[10px]"><Clock /></div>
          <Svg s={16} vb="0 0 16 16" className="ml-[18px]"><path d="M.7.7h14.600v12.600H10L8 15.300 6 13.300H.7z" /></Svg>
          <div className="ml-5 mr-1 h-10 w-px bg-[#7d8699]" />
        </div>
      </div>
    </div>
  );
}

export default function App() {
  return (
    <div className="flex h-[1081px] w-[3600px] overflow-hidden bg-black font-['Open_Sans',sans-serif]">
      <LeftScreen />
      <RightScreen />
    </div>
  );
}
